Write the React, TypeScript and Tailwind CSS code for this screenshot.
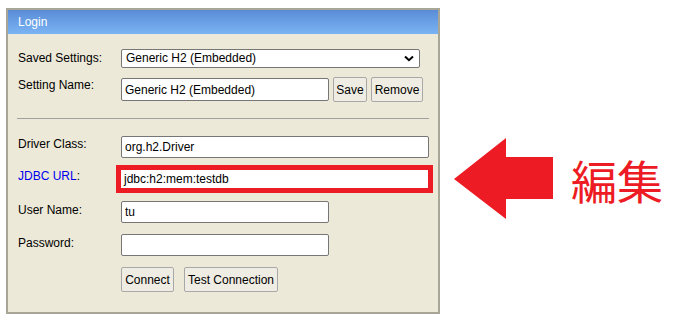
import React from "react";

const inputCls =
  "h-[22px] bg-white border border-[#767676] rounded-[2px] pl-[3px] flex items-center text-[12px] text-black whitespace-nowrap";
const btnCls =
  "h-[25px] bg-[#efede3] border border-[#a8a8a8] rounded-[2px] flex items-center justify-center text-[12px] text-black whitespace-nowrap";
const labelBase = "w-[103px] text-[12px] leading-[14px] whitespace-nowrap";
const labelCls = labelBase + " text-black";

export default function App() {
  return (
    <div
      className="w-[683px] h-[328px] bg-white flex items-start pt-[8px] pl-[6px]"
      style={{ fontFamily: '"Liberation Sans", Arial, sans-serif' }}
    >
      {/* Panel */}
      <div className="w-[434px] h-[306px] border-2 border-[#a8a797] bg-[#ece9d8] flex flex-col">
        <div className="h-[24px] bg-gradient-to-b from-[#5a8cd6] to-[#7ab4f4] flex items-center pl-[10px] text-white text-[12px] leading-[14px]">
          Login
        </div>
        <div className="flex flex-col pl-[10px]">
          {/* Saved settings */}
          <div className="flex items-center mt-[15px] h-[18px]">
            <div className={labelCls}>Saved Settings:</div>
            <div className="w-[299px] h-[19px] bg-white border border-[#767676] rounded-[2px] flex items-center justify-between pl-[4px] pr-[5px] text-[12px] text-black">
              <span>Generic H2 (Embedded)</span>
              <svg width="10" height="7" viewBox="0 0 10 7">
                <path d="M1 1.5 L5 5.2 L9 1.5" fill="none" stroke="#000" strokeWidth="2" />
              </svg>
            </div>
          </div>
          {/* Setting name */}
          <div className="flex items-start mt-[10px] h-[25px]">
            <div className={labelCls + " pt-[1px]"}>Setting Name:</div>
            <div className={inputCls + " w-[208px] h-[23px] mt-[1px]"}>Generic H2 (Embedded)</div>
            <div className={btnCls + " w-[34px] ml-[4px]"}>Save</div>
            <div className={btnCls + " w-[52px] ml-[4px]"}>Remove</div>
          </div>
          {/* HR */}
          <div className="mt-[16px] w-[412px] -ml-[1px] h-[1px] bg-[#a0a0a0]" />
          {/* Driver class */}
          <div className="flex items-start mt-[17px]">
            <div className={labelCls + " pt-[1px]"}>Driver Class:</div>
            <div className={inputCls + " w-[308px]"}>org.h2.Driver</div>
          </div>
          {/* JDBC URL */}
          <div className="flex items-start mt-[7px]">
            <div className={labelBase + " pt-[4px] text-[#0000ee]"}>
              JDBC URL<span className="text-black">:</span>
            </div>
            <div className="-ml-[5px] w-[317px] h-[28px] border-[5px] border-[#ed1c24] bg-white flex items-center pl-[3px] text-[12px] text-black">
              jdbc:h2:mem:testdb
            </div>
          </div>
          {/* User name */}
          <div className="flex items-start mt-[8px]">
            <div className={labelCls + " pt-[2px]"}>User Name:</div>
            <div className={inputCls + " w-[208px]"}>tu</div>
          </div>
          {/* Password */}
          <div className="flex items-start mt-[11px]">
            <div className={labelCls + " pt-[2px]"}>Password:</div>
            <div className={inputCls + " w-[208px]"}></div>
          </div>
          {/* Buttons */}
          <div className="flex items-start mt-[11px] pl-[103px]">
            <div className={btnCls + " w-[53px]"}>Connect</div>
            <div className={btnCls + " w-[94px] ml-[10px]"}>Test Connection</div>
          </div>
        </div>
      </div>

      {/* Arrow + text */}
      <div className="flex items-center ml-[14px] mt-[130px]">
        <svg width="100" height="81" viewBox="0 0 100 81">
          <polygon points="0,41 52,0 52,19 99,19 99,61 52,61 52,81" fill="#ed1c24" />
        </svg>
        <div
          className="ml-[17px] text-[46px] leading-[50px] text-[#ed1c24]"
          style={{ fontFamily: '"Noto Sans CJK JP", "Noto Sans CJK SC", sans-serif' }}
        >
          編集
        </div>
      </div>
    </div>
  );
}
